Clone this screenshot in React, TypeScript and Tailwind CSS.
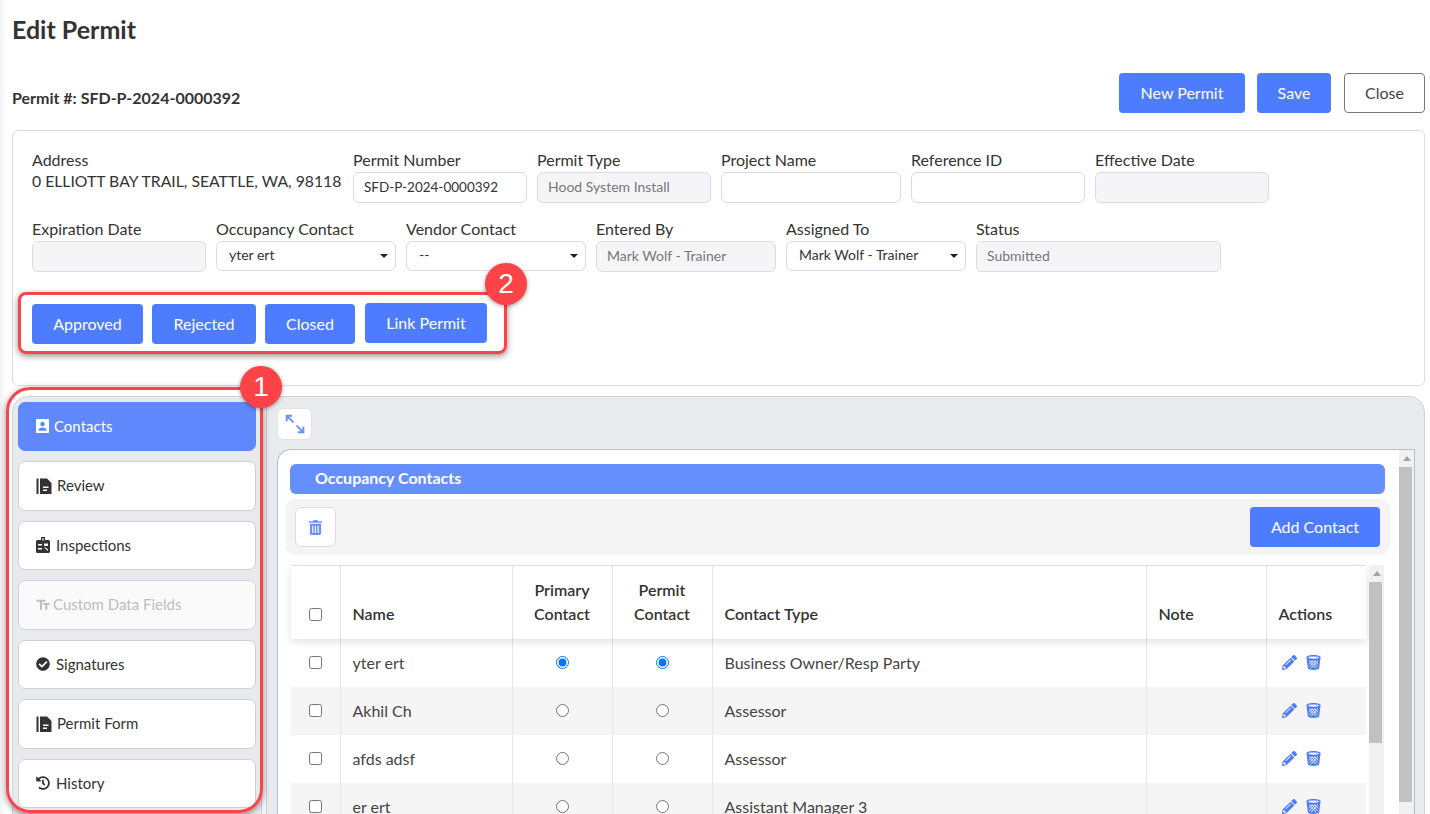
// Edit Permit screen
import type { ReactNode } from 'react';
import clsx from 'clsx';
import { FaCheckCircle, FaHistory, FaPencilAlt } from 'react-icons/fa';
import { MdTextFields } from 'react-icons/md';

const BookFileIcon = () => (
  <svg viewBox="0 0 16 16" className="w-[16px] h-[16px]" fill="currentColor">
    <rect x="0.5" y="0.5" width="2" height="15.5" />
    <path fillRule="evenodd" d="M4 0.5h7l4.500 4.500V16H4zM7 8.500v1.500h5.500V8.500zM7 11.500v1.500h4V11.500z" />
  </svg>
);

const ContactIcon = () => (
  <svg viewBox="0 0 14 15" className="w-[13px] h-[14px]" fill="currentColor">
    <path fillRule="evenodd" d="M0 0h14v15H0zM7 3a2.400 2.400 0 1 0 0 4.800A2.400 2.400 0 0 0 7 3zM2.500 12.500c0-2.200 2-3.500 4.500-3.500s4.500 1.300 4.500 3.500z" />
  </svg>
);

const BadgeIcon = () => (
  <svg viewBox="0 0 14 16" className="w-[14px] h-[16px]" fill="currentColor">
    <path fillRule="evenodd" d="M5 0h4v3h3.500A1.500 1.500 0 0 1 14 4.500v10a1.500 1.500 0 0 1-1.500 1.500h-11A1.500 1.500 0 0 1 0 14.500v-10A1.500 1.500 0 0 1 1.500 3H5zM6.300 1.200v2.300h1.400V1.200zM2 7v1.500h4V7zM8 6.500v2.500h4V6.500zM2 11v1.500h4V11zM8 10.500L12 14v-1.500L9.500 10.500z" />
  </svg>
);

const ExpandIcon = () => (
  <svg viewBox="0 0 18 18" className="w-[20px] h-[20px]" fill="none" stroke="#6a92fc" strokeWidth="1.800">
    <path d="M1.500 6.500V1.500h5M1.500 1.500l6 6M16.500 11.500v5h-5M16.500 16.500l-6-6" />
  </svg>
);

const TrashIcon = () => (
  <svg viewBox="0 0 14 16" className="w-[13px] h-[15px]" fill="#6a92fc">
    <path fillRule="evenodd" d="M5 0h4l.600 1.200H14v1.600H0V1.200h4.400zM1 4h12v10.500a1.500 1.500 0 0 1-1.500 1.500h-9A1.500 1.500 0 0 1 1 14.500zM3.500 6v8h1.200V6zM6.400 6v8h1.200V6zM9.300 6v8h1.200V6z" />
  </svg>
);

const BinIcon = () => (
  <svg viewBox="0 0 16 16" className="w-[15px] h-[15px]">
    <path fill="#4d7cfe" d="M0.500 2.500C0.500 1 3.500 0 8 0s7.500 1 7.500 2.500L14 14.500C13.500 15.500 11 16 8 16s-5.500-.5-6-1.500z" />
    <ellipse cx="8" cy="2.700" rx="5.800" ry="1.200" fill="#fff" />
    <path stroke="#fff" strokeWidth="0.900" fill="none" d="M3.500 6l7 8M6.500 6l6 7M9.500 6l3.500 4M12.500 6l-7 8M9.500 6l-6 7M6.500 6L3 10" />
  </svg>
);

function Caret() {
  return <span className="absolute right-[7px] top-[12px] border-x-[4px] border-t-[4px] border-x-transparent border-t-[#222] pointer-events-none" />;
}

function Field({ label, className, children }: { label: string; className: string; children: ReactNode }) {
  return (
    <div className={className}>
      <div className="h-[22px] leading-[20px] text-[16px] text-[#333] whitespace-nowrap">{label}</div>
      {children}
    </div>
  );
}

function TextInput({ value, disabled }: { value?: string; disabled?: boolean }) {
  return (
    <input
      readOnly
      value={value ?? ''}
      className={clsx(
        'block w-full h-[31px] px-[10px] rounded-[6px] border border-[#dcdcdc] outline-none',
        disabled ? 'bg-[#f5f5f7] text-[#777] text-[14px] pb-[3px]' : 'bg-white text-[#333] text-[13.5px] pb-[1px]'
      )}
    />
  );
}

function SelectBox({ value }: { value: string }) {
  return (
    <div className="relative h-[30px] rounded-[6px] border border-[#dcdcdc] bg-white pl-[12px] leading-[26px] text-[14px] text-[#333]">
      {value}
      <Caret />
    </div>
  );
}

function ActionButton({ label, className }: { label: string; className: string }) {
  return (
    <button type="button" className={clsx('h-[40px] rounded-[4px] bg-[#4d7cfe] text-white text-[16px]', className)}>
      {label}
    </button>
  );
}

const tabs: { label: string; icon: ReactNode; gap: string; active?: boolean; disabled?: boolean }[] = [
  { label: 'Contacts', icon: <ContactIcon />, gap: 'gap-[5px]', active: true },
  { label: 'Review', icon: <BookFileIcon />, gap: 'gap-[5px]' },
  { label: 'Inspections', icon: <BadgeIcon />, gap: 'gap-[6px]' },
  { label: 'Custom Data Fields', icon: <MdTextFields className="w-[16px] h-[16px] -ml-[1px]" />, gap: 'gap-[2px]', disabled: true },
  { label: 'Signatures', icon: <FaCheckCircle className="w-[14px] h-[14px]" />, gap: 'gap-[6px]' },
  { label: 'Permit Form', icon: <BookFileIcon />, gap: 'gap-[5px]' },
  { label: 'History', icon: <FaHistory className="w-[14px] h-[14px]" />, gap: 'gap-[6px]' },
];

const rows = [
  { name: 'yter ert', type: 'Business Owner/Resp Party', selected: true },
  { name: 'Akhil Ch', type: 'Assessor' },
  { name: 'afds adsf', type: 'Assessor' },
  { name: 'er ert', type: 'Assistant Manager 3' },
];

function Scrollbar({ className, thumb }: { className: string; thumb: string }) {
  return (
    <div className={clsx('relative shrink-0 bg-[#f1f1f1]', className)}>
      <span className="block mx-auto mt-[6px] w-0 border-x-[4px] border-b-[5px] border-x-transparent border-b-[#a3a3a3]" />
      <div className={clsx('mt-[6px] bg-[#c1c1c1]', thumb)} />
    </div>
  );
}

function ContactsTable() {
  const divider = 'border-l border-t border-[#e6e6e6] px-3 align-bottom font-semibold';
  const cell = 'border-l border-[#e6e6e6] px-3 align-middle';
  return (
    <table className="w-[1075px] table-fixed border-collapse text-[16px] text-[#444]">
      <colgroup>
        <col className="w-[49px]" />
        <col className="w-[172px]" />
        <col className="w-[100px]" />
        <col className="w-[100px]" />
        <col className="w-[434px]" />
        <col className="w-[120px]" />
        <col className="w-[100px]" />
      </colgroup>
      <thead>
        <tr className="h-[73px] bg-white shadow-[0_3px_8px_rgba(0,0,0,0.12)] relative text-[#333]">
          <th className="pb-[18px] align-bottom border-t border-[#e6e6e6]">
            <input type="checkbox" readOnly className="block mx-auto" />
          </th>
          <th className={clsx(divider, 'text-left pb-[13px]')}>Name</th>
          <th className={clsx(divider, 'pb-[13px] leading-[24px]')}>Primary<br />Contact</th>
          <th className={clsx(divider, 'pb-[13px] leading-[24px]')}>Permit<br />Contact</th>
          <th className={clsx(divider, 'text-left pb-[13px]')}>Contact Type</th>
          <th className={clsx(divider, 'text-left pb-[13px]')}>Note</th>
          <th className={clsx(divider, 'text-left pb-[13px]')}>Actions</th>
        </tr>
      </thead>
      <tbody>
        {rows.map((row, index) => (
          <tr key={row.name} className={clsx('h-[48px]', index % 2 === 1 && 'bg-[#f5f5f5]')}>
            <td className="text-center">
              <input type="checkbox" readOnly className="block mx-auto" />
            </td>
            <td className={cell}>{row.name}</td>
            <td className={clsx(cell, 'text-center')}>
              <input type="radio" readOnly checked={!!row.selected} className="block mx-auto" />
            </td>
            <td className={clsx(cell, 'text-center')}>
              <input type="radio" readOnly checked={!!row.selected} className="block mx-auto" />
            </td>
            <td className={cell}>{row.type}</td>
            <td className={cell} />
            <td className={cell}>
              <div className="flex items-center gap-[9px] pl-[3px] text-[#4d7cfe]">
                <FaPencilAlt className="w-[15px] h-[15px]" />
                <BinIcon />
              </div>
            </td>
          </tr>
        ))}
      </tbody>
    </table>
  );
}

export default function App() {
  return (
    <div className="relative h-[814px] overflow-hidden bg-white pl-[12px] pr-[5px] pt-[14px] font-['Lato','Liberation_Sans',sans-serif] text-[#333] shadow-[inset_7px_0_6px_-5px_rgba(0,0,0,0.07)]">
      <h1 className="h-[32px] leading-[30px] text-[25px] font-bold text-[#333]">Edit Permit</h1>

      <div className="mt-[27px] flex items-center justify-between">
        <div className="pt-[10px] text-[16px] font-bold">Permit #: SFD-P-2024-0000392</div>
        <div className="flex">
          <button type="button" className="h-[40px] w-[126px] rounded-[4px] bg-[#4d7cfe] text-white text-[16px]">New Permit</button>
          <button type="button" className="ml-[12px] h-[40px] w-[74px] rounded-[4px] bg-[#4d7cfe] text-white text-[16px]">Save</button>
          <button type="button" className="ml-[13px] h-[40px] w-[81px] rounded-[4px] border border-[#777] bg-white text-[#444] text-[16px]">Close</button>
        </div>
      </div>

      <section className="mt-[17px] h-[256px] rounded-[6px] border border-[#dcdcdc] bg-white pl-[19px] pt-[19px]">
        <div className="flex gap-[10px]">
          <Field label="Address" className="w-[311px]">
            <div className="text-[15.75px] leading-[18px] whitespace-nowrap">0 ELLIOTT BAY TRAIL, SEATTLE, WA, 98118</div>
          </Field>
          <Field label="Permit Number" className="w-[174px]"><TextInput value="SFD-P-2024-0000392" /></Field>
          <Field label="Permit Type" className="w-[174px]"><TextInput value="Hood System Install" disabled /></Field>
          <Field label="Project Name" className="w-[180px]"><TextInput /></Field>
          <Field label="Reference ID" className="w-[174px]"><TextInput /></Field>
          <Field label="Effective Date" className="w-[174px]"><TextInput disabled /></Field>
        </div>
        <div className="mt-[16px] flex gap-[10px]">
          <Field label="Expiration Date" className="w-[174px]"><TextInput disabled /></Field>
          <Field label="Occupancy Contact" className="w-[180px]"><SelectBox value="yter ert" /></Field>
          <Field label="Vendor Contact" className="w-[180px]"><SelectBox value="--" /></Field>
          <Field label="Entered By" className="w-[180px]"><TextInput value="Mark Wolf - Trainer" disabled /></Field>
          <Field label="Assigned To" className="w-[180px]"><SelectBox value="Mark Wolf - Trainer" /></Field>
          <Field label="Status" className="w-[245px]"><TextInput value="Submitted" disabled /></Field>
        </div>
        <div className="mt-[32px] flex items-start">
          <ActionButton label="Approved" className="w-[111px]" />
          <ActionButton label="Rejected" className="ml-[9px] w-[104px]" />
          <ActionButton label="Closed" className="ml-[9px] w-[90px]" />
          <ActionButton label="Link Permit" className="ml-[10px] -mt-[1px] w-[122px]" />
        </div>
      </section>

      <section className="mt-[10px] flex h-[500px] overflow-hidden rounded-t-[16px] border border-[#d4d4d8] bg-[#e9eaee]">
        <nav className="w-[249px] shrink-0 flex flex-col gap-[10px] pl-[5px] pt-[4.75px] border-r border-[#cfcfd3]">
          {tabs.map((tab) => (
            <div
              key={tab.label}
              className={clsx(
                'h-[49.5px] w-[238px] shrink-0 flex items-center pl-[17px] pb-[1px] rounded-[7px] border text-[15px]',
                tab.gap,
                tab.active && 'bg-[#5f88fd] border-[#5f88fd] text-white',
                tab.disabled && 'bg-[#fafafa] border-[#d4d4d8] text-[#bdbdbd]',
                !tab.active && !tab.disabled && 'bg-white border-[#d0d0d4] text-[#333]'
              )}
            >
              {tab.icon}
              <span>{tab.label}</span>
            </div>
          ))}
        </nav>

        <div className="w-[5px] shrink-0 bg-[#f4f4f6] border-r border-[#cfcfd3]" />

        <div className="flex-1 min-w-0 pl-[10px] pt-[11px] pr-[9px]">
          <button type="button" className="flex items-center justify-center w-[35px] h-[32px] rounded-[6px] border border-[#e2e2e2] bg-white">
            <ExpandIcon />
          </button>
          <div className="mt-[9px] flex h-[400px] rounded-tl-[14px] border-t border-l border-r border-[#bdbdbd] bg-white">
            <div className="flex-1 min-w-0 pl-[7px] pr-[9px] pt-[14px]">
              <div className="mx-[5px] h-[30px] rounded-[6px] bg-[#668ffe] pl-[25px] leading-[28px] text-[16px] font-bold text-white">Occupancy Contacts</div>
              <div className="mt-[5px] flex h-[56px] items-center justify-between rounded-[10px] bg-[#f4f4f4] pl-[10px] pr-[10px]">
                <button type="button" className="flex items-center justify-center w-[41px] h-[40px] rounded-[6px] border border-[#dcdcdc] bg-white"><TrashIcon /></button>
                <button type="button" className="h-[40px] w-[130px] rounded-[4px] bg-[#4d7cfe] text-white text-[16px]">Add Contact</button>
              </div>
              <div className="mt-[10px] ml-[6px] flex">
                <ContactsTable />
                <Scrollbar className="ml-[3px] w-[15px] h-[260px]" thumb="h-[161px] w-[13px]" />
              </div>
            </div>
            <Scrollbar className="w-[15px]" thumb="h-[335px] w-[13px]" />
          </div>
        </div>
      </section>

      {/* Annotation callouts over the page */}
      <div className="absolute left-[18px] top-[292px] w-[489px] h-[62px] rounded-[8px] border-[3px] border-[#fb4348] shadow-[0_2px_6px_rgba(0,0,0,0.45)]" />
      <div className="absolute left-[6px] top-[387px] w-[257px] h-[426px] rounded-[24px] border-[3px] border-[#fb4348] shadow-[0_2px_6px_rgba(0,0,0,0.45)]" />
      <div className="absolute left-[485px] top-[263px] w-[42px] h-[42px] rounded-full bg-[#fb4348] text-white text-[28px] leading-[42px] text-center font-['Liberation_Sans',sans-serif] shadow-[0_1px_4px_rgba(0,0,0,0.4)]">2</div>
      <div className="absolute left-[240px] top-[366px] w-[42px] h-[42px] rounded-full bg-[#fb4348] text-white text-[28px] leading-[42px] text-center font-['Liberation_Sans',sans-serif] shadow-[0_1px_4px_rgba(0,0,0,0.4)]">1</div>
    </div>
  );
}
